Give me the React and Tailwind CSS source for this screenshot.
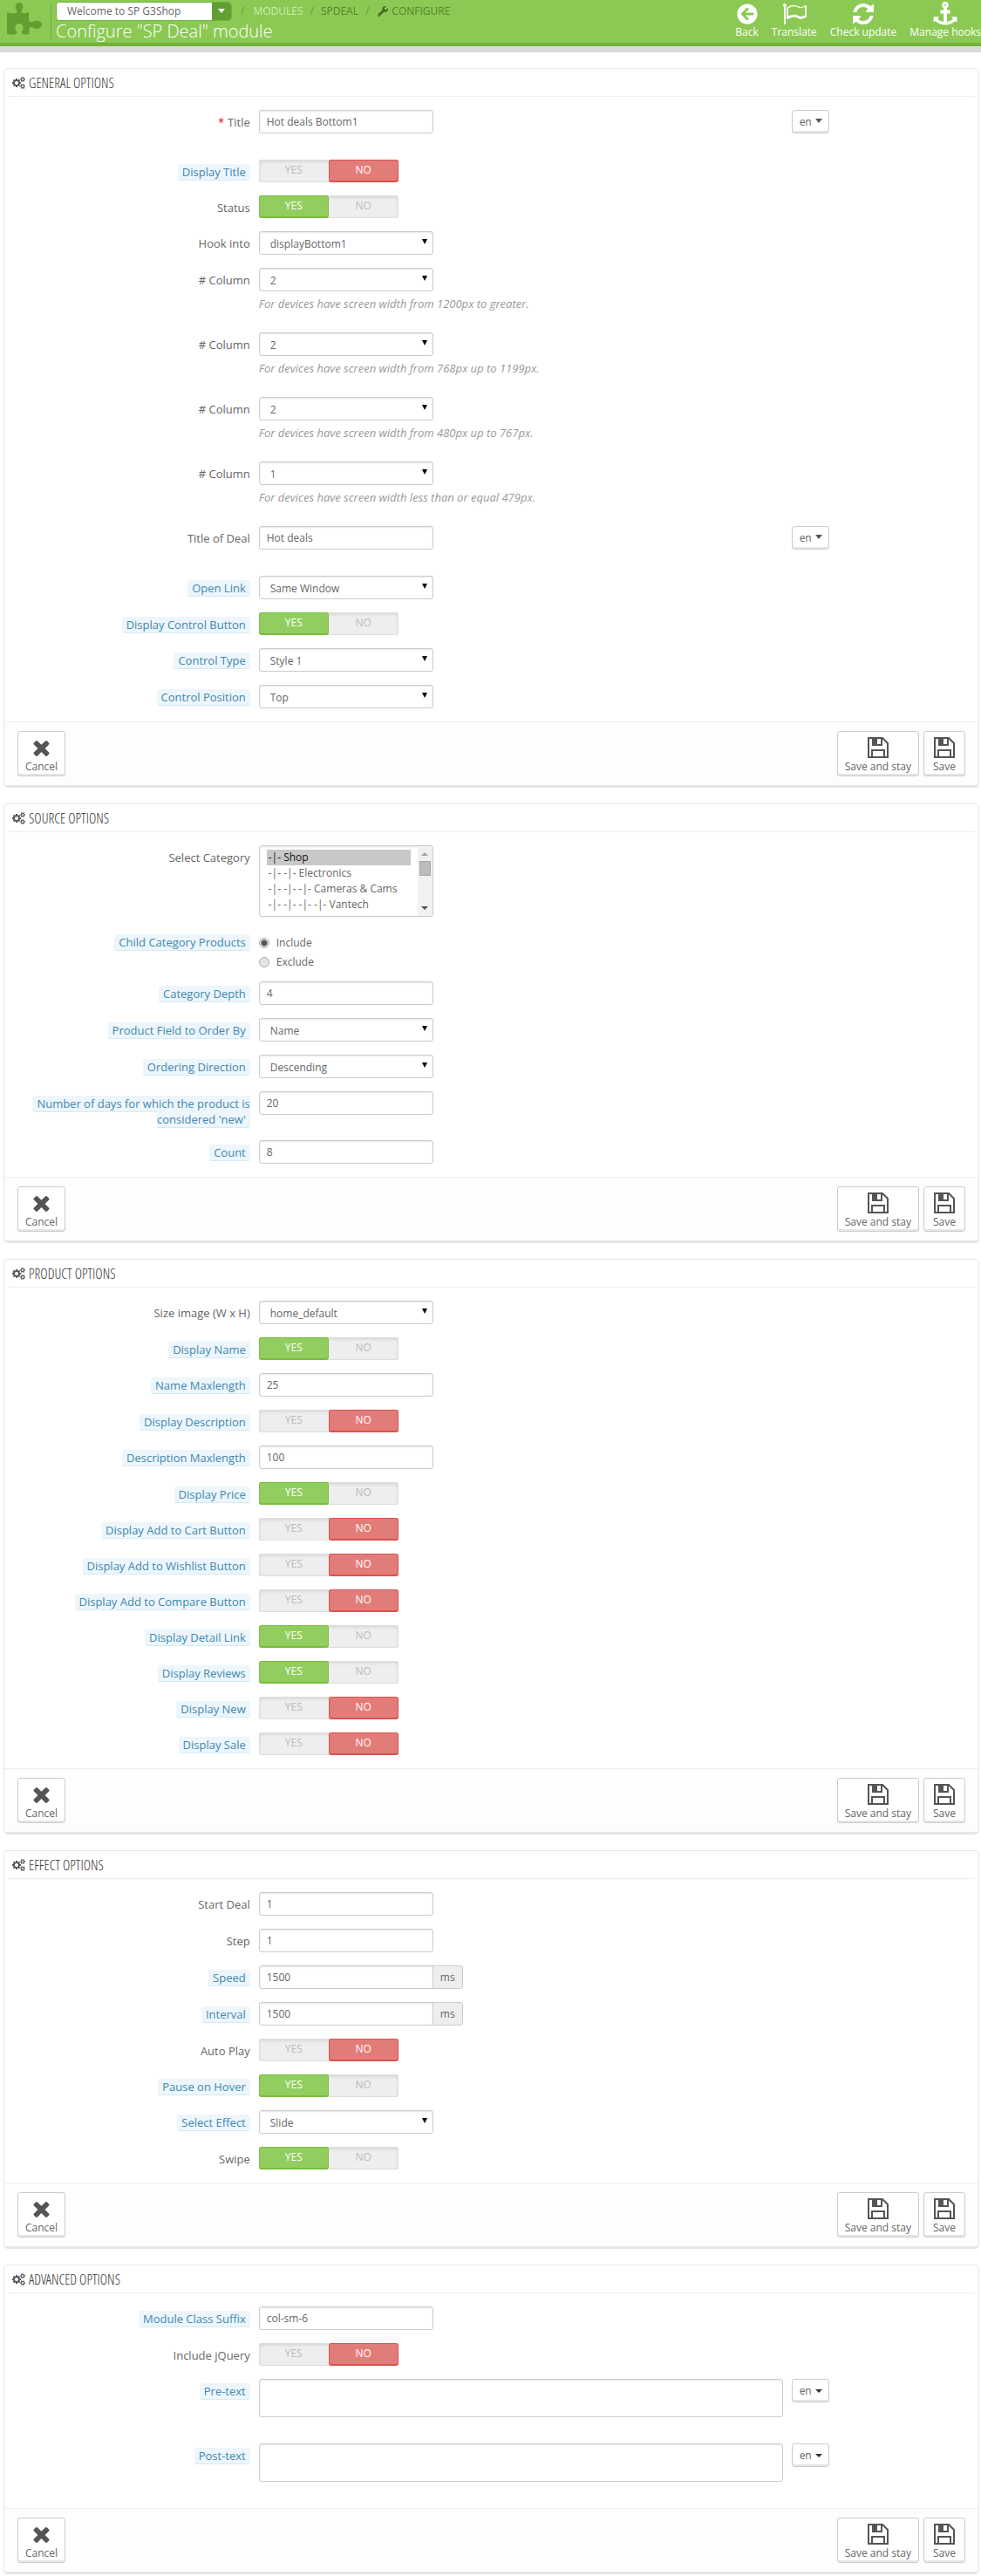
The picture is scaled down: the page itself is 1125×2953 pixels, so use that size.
import { useId, useState } from "react";
import { FaArrowCircleLeft, FaWrench } from "react-icons/fa";

const PANELS = [
  {
    title: "General options",
    fields: [
      { type: "text", label: "Title", value: "Hot deals Bottom1", required: true, lang: true },
      { type: "switch", label: "Display Title", hint: true, on: false },
      { type: "switch", label: "Status", on: true },
      { type: "select", label: "Hook into", value: "displayBottom1" },
      { type: "select", label: "# Column", value: "2", help: "For devices have screen width from 1200px to greater." },
      { type: "select", label: "# Column", value: "2", help: "For devices have screen width from 768px up to 1199px." },
      { type: "select", label: "# Column", value: "2", help: "For devices have screen width from 480px up to 767px." },
      { type: "select", label: "# Column", value: "1", help: "For devices have screen width less than or equal 479px." },
      { type: "text", label: "Title of Deal", value: "Hot deals", lang: true },
      { type: "select", label: "Open Link", hint: true, value: "Same Window" },
      { type: "switch", label: "Display Control Button", hint: true, on: true },
      { type: "select", label: "Control Type", hint: true, value: "Style 1" },
      { type: "select", label: "Control Position", hint: true, value: "Top" },
    ],
  },
  {
    title: "Source options",
    fields: [
      {
        type: "listbox",
        label: "Select Category",
        options: ["-|- Shop", "-|- -|- Electronics", "-|- -|- -|- Cameras & Cams", "-|- -|- -|- -|- Vantech"],
      },
      { type: "radios", label: "Child Category Products", hint: true, options: ["Include", "Exclude"] },
      { type: "text", label: "Category Depth", hint: true, value: "4" },
      { type: "select", label: "Product Field to Order By", hint: true, value: "Name" },
      { type: "select", label: "Ordering Direction", hint: true, value: "Descending" },
      { type: "text", label: "Number of days for which the product is considered 'new'", hint: true, value: "20" },
      { type: "text", label: "Count", hint: true, value: "8" },
    ],
  },
  {
    title: "Product options",
    fields: [
      { type: "select", label: "Size image (W x H)", value: "home_default" },
      { type: "switch", label: "Display Name", hint: true, on: true },
      { type: "text", label: "Name Maxlength", hint: true, value: "25" },
      { type: "switch", label: "Display Description", hint: true, on: false },
      { type: "text", label: "Description Maxlength", hint: true, value: "100" },
      { type: "switch", label: "Display Price", hint: true, on: true },
      { type: "switch", label: "Display Add to Cart Button", hint: true, on: false },
      { type: "switch", label: "Display Add to Wishlist Button", hint: true, on: false },
      { type: "switch", label: "Display Add to Compare Button", hint: true, on: false },
      { type: "switch", label: "Display Detail Link", hint: true, on: true },
      { type: "switch", label: "Display Reviews", hint: true, on: true },
      { type: "switch", label: "Display New", hint: true, on: false },
      { type: "switch", label: "Display Sale", hint: true, on: false },
    ],
  },
  {
    title: "Effect options",
    fields: [
      { type: "text", label: "Start Deal", value: "1" },
      { type: "text", label: "Step", value: "1" },
      { type: "text", label: "Speed", hint: true, value: "1500", suffix: "ms" },
      { type: "text", label: "Interval", hint: true, value: "1500", suffix: "ms" },
      { type: "switch", label: "Auto Play", on: false },
      { type: "switch", label: "Pause on Hover", hint: true, on: true },
      { type: "select", label: "Select Effect", hint: true, value: "Slide" },
      { type: "switch", label: "Swipe", on: true },
    ],
  },
  {
    title: "Advanced options",
    fields: [
      { type: "text", label: "Module Class Suffix", hint: true, value: "col-sm-6" },
      { type: "switch", label: "Include jQuery", on: false },
      { type: "textarea", label: "Pre-text", hint: true, lang: true },
      { type: "textarea", label: "Post-text", hint: true, lang: true },
    ],
  },
];

export default function App() {
  return (
    <div className="min-h-screen overflow-x-hidden bg-white pb-0.5 font-['Open_Sans',sans-serif] text-xs text-[#666]">
      <PageHeader />
      <main className="mt-[18px] ml-1 mr-0.5 flex flex-col gap-[18px]">
        {PANELS.map((panel) => (
          <Panel key={panel.title} {...panel} />
        ))}
      </main>
    </div>
  );
}

function PageHeader() {
  return (
    <header className="border-b-[7px] border-[#d9d9d9]">
      <div className="flex h-[53px] justify-between border-b-4 border-[#72b239] bg-[#8bc954]">
        <div className="flex">
          <div className="flex w-[58px] pt-[3px] pl-2 text-[#619f32]">
            <PuzzleIcon />
          </div>
          <div className="my-1 border-l border-[#6fae3c]" />
          <div className="ml-[5px] pt-0.5">
            <nav className="flex h-[22px] items-center whitespace-nowrap">
              <button
                type="button"
                className="mr-2.5 flex h-[22px] w-[202px] overflow-hidden rounded-sm border border-[#72b239] bg-white text-left leading-5"
              >
                <span className="flex-1 pl-3">Welcome to SP G3Shop</span>
                <span className="flex w-[22px] justify-center bg-[#619f32] pt-[7px] text-white">
                  <Triangle className="h-[5px] w-2" />
                </span>
              </button>
              <span className="text-[#659a3b]">/</span>
              <a href="#modules" className="ml-2.5 text-[#cdecae]">MODULES</a>
              <span className="ml-2 text-[#659a3b]">/</span>
              <a href="#spdeal" className="ml-2 text-[#56852f]">SPDEAL</a>
              <span className="ml-2 text-[#659a3b]">/</span>
              <a href="#configure" className="ml-2.5 flex items-center gap-1 text-[#56852f]">
                <FaWrench className="h-3 w-3 text-[#446b25]" />
                CONFIGURE
              </a>
            </nav>
            <h1 className="text-xl leading-6 font-light text-white">Configure "SP Deal" module</h1>
          </div>
        </div>
        <div className="flex gap-[15px] pt-1 text-white">
          <ToolbarLink label="Back" icon={<FaArrowCircleLeft className="h-6 w-6" />} />
          <ToolbarLink label="Translate" icon={<FlagIcon />} />
          <ToolbarLink label="Check update" icon={<RefreshIcon />} />
          <ToolbarLink label="Manage hooks" icon={<AnchorIcon />} />
        </div>
      </div>
    </header>
  );
}

function ToolbarLink({ label, icon }) {
  return (
    <a href="#action" className="flex flex-col items-center whitespace-nowrap leading-[18px]">
      <span className="flex h-6 items-center">{icon}</span>
      {label}
    </a>
  );
}

function Panel({ title, fields }) {
  return (
    <section className="rounded-[5px] border border-b-[3px] border-[#e6e6e6] bg-white">
      <h2 className="mx-1 mb-[15px] flex h-8 items-center gap-1 border-b border-[#eee] pl-[5px] font-['Open_Sans_Condensed_Light','Open_Sans_Condensed',sans-serif] text-base text-[#333] uppercase">
        <CogsIcon />
        {title}
      </h2>
      <form onSubmit={(e) => e.preventDefault()}>
        <div className="flex flex-col gap-[15px] px-[15px] pb-[15px]">
          {fields.map((field, i) => (
            <Field key={i} {...field} />
          ))}
        </div>
        <div className="flex justify-between rounded-b-[5px] border-t border-[#eee] bg-[#fcfdfe] px-[15px] py-2.5">
          <FooterButton label="Cancel" icon={<TimesIcon />} />
          <div className="flex gap-[5px]">
            <FooterButton label="Save and stay" icon={<SaveIcon />} />
            <FooterButton label="Save" icon={<SaveIcon />} />
          </div>
        </div>
      </form>
    </section>
  );
}

function FooterButton({ label, icon }) {
  return (
    <button
      type="button"
      className="flex h-[52px] flex-col items-center rounded-[3px] border border-[#ccc] bg-white px-2 pt-[5px] leading-[18px] shadow-[inset_0_-2px_0_#e6e6e6]"
    >
      <span className="flex h-[26px] w-[30px] items-center justify-center text-[#555]">{icon}</span>
      {label}
    </button>
  );
}

function Field({ label, hint, required, help, lang, type, ...rest }) {
  const id = useId();
  const grouped = type === "switch" || type === "radios";
  const LabelTag = grouped ? "div" : "label";

  return (
    <div className="flex" role={grouped ? "group" : undefined} aria-labelledby={grouped ? id + "-label" : undefined}>
      <LabelTag
        id={id + "-label"}
        htmlFor={grouped ? undefined : id}
        className="w-1/4 px-[5px] pt-[5px] text-right text-[13px] leading-[18px]"
      >
        {required && <span className="mr-1 text-red-600">*</span>}
        {hint ? (
          <span className="rounded-[3px] border-b border-[#d3ebf7] bg-[#edf6fb] px-[5px] text-[#3f87b0]">{label}</span>
        ) : (
          label
        )}
      </LabelTag>
      <div className="flex w-3/4">
        <div className={lang ? "w-3/4 px-[5px] pb-[15px]" : "px-[5px]"}>
          <Control id={id} type={type} {...rest} />
          {help && <p className="mt-[5px] mb-[9px] text-[13px] leading-[18px] text-[#999] italic">{help}</p>}
        </div>
        {lang && (
          <div className="px-[5px]">
            <button
              type="button"
              className="flex h-[27px] w-[43px] items-center justify-center gap-1 rounded-[3px] border border-[#ccc] bg-white shadow-[inset_0_-2px_0_#e6e6e6]"
            >
              en
              <Triangle className={type === "textarea" ? "h-1 w-2 text-[#333]" : "mb-[3px] h-[5px] w-2 text-[#555]"} />
            </button>
          </div>
        )}
      </div>
    </div>
  );
}

const boxClass = "border border-[#ccc] bg-white shadow-[inset_0_1px_2px_rgba(0,0,0,0.1)] outline-none";

function Control({ id, type, value, suffix, on, options }) {
  if (type === "switch") return <Switch name={id} on={on} />;
  if (type === "radios") return <Radios name={id} options={options} />;
  if (type === "listbox") return <Listbox id={id} options={options} />;

  if (type === "textarea") {
    return <textarea id={id} className={`block h-11 w-full resize-none rounded-[3px] px-2 py-1 ${boxClass}`} />;
  }

  if (type === "select") {
    return (
      <div className="relative w-[200px]">
        <select id={id} className={`block h-[27px] w-full appearance-none rounded-[3px] pt-0.5 pl-3 leading-[23px] ${boxClass}`}>
          <option>{value}</option>
        </select>
        <Triangle className="pointer-events-none absolute top-[9px] right-[7px] h-1.5 w-1.5 text-black" />
      </div>
    );
  }

  return (
    <div className="flex">
      <input
        id={id}
        type="text"
        defaultValue={value}
        className={`h-[27px] w-[200px] px-2 ${suffix ? "rounded-l-[3px]" : "rounded-[3px]"} ${boxClass}`}
      />
      {suffix && (
        <span className="-ml-px flex h-[27px] w-[35px] items-center justify-center rounded-r-[3px] border border-[#ccc] bg-[#eee]">
          {suffix}
        </span>
      )}
    </div>
  );
}

function Switch({ name, on }) {
  const [value, setValue] = useState(on);
  const half =
    "flex w-20 cursor-pointer items-center justify-center rounded-[3px] border border-transparent pb-0.5 text-[#bbb]";

  return (
    <div className="flex h-[26px] w-40 rounded-[3px] bg-[#eee] shadow-[inset_0_0_0_1px_#ddd,inset_0_2px_4px_rgba(0,0,0,0.12)]">
      <label className={`${half} has-checked:border-b-2 has-checked:border-[#79bd3c] has-checked:bg-[#92ce5f] has-checked:pb-px has-checked:text-white`}>
        <input type="radio" name={name} className="sr-only" checked={value} onChange={() => setValue(true)} />
        YES
      </label>
      <label className={`${half} has-checked:border-b-2 has-checked:border-[#d9534f] has-checked:bg-[#e27c79] has-checked:pb-px has-checked:text-white`}>
        <input type="radio" name={name} className="sr-only" checked={!value} onChange={() => setValue(false)} />
        NO
      </label>
    </div>
  );
}

function Radios({ name, options }) {
  return (
    <div>
      {options.map((option, i) => (
        <label key={option} className="flex h-[22px] items-center gap-2 pt-2">
          <input
            type="radio"
            name={name}
            defaultChecked={i === 0}
            className="h-3 w-3 appearance-none rounded-full border border-[#aaa] bg-[#e4e4e4] checked:bg-[radial-gradient(circle,#555_3px,#e4e4e4_4px)]"
          />
          {option}
        </label>
      ))}
    </div>
  );
}

function Listbox({ id, options }) {
  return (
    <div className={`flex h-[82px] w-[200px] overflow-hidden rounded-[3px] ${boxClass}`}>
      <select
        id={id}
        multiple
        size={4}
        defaultValue={[options[0]]}
        className="h-20 min-w-0 flex-1 overflow-hidden bg-transparent py-1 pr-2 pl-2 outline-none"
      >
        {options.map((option) => (
          <option
            key={option}
            className="h-[18px] px-0.5 py-0 leading-[18px] checked:bg-[#c8c8c8] checked:bg-[linear-gradient(#c8c8c8,#c8c8c8)]"
          >
            {option}
          </option>
        ))}
      </select>
      <div className="flex w-[17px] flex-col items-center bg-[#f1f1f1] pt-[7px] pb-[7px]" aria-hidden="true">
        <Triangle className="h-1 w-2 rotate-180 text-[#a3a3a3]" />
        <span className="mt-1.5 h-[17px] w-[13px] border border-[#a8a8a8] bg-[#bcbcbc]" />
        <Triangle className="mt-auto h-1 w-2 text-[#505050]" />
      </div>
    </div>
  );
}

function Triangle({ className }) {
  return (
    <svg viewBox="0 0 10 6" preserveAspectRatio="none" fill="currentColor" className={className} aria-hidden="true">
      <path d="M0 0h10L5 6z" />
    </svg>
  );
}

function PuzzleIcon() {
  return (
    <svg viewBox="0 0 120 111" fill="currentColor" className="h-[37px] w-10" aria-hidden="true">
      <path d="M0 34C10 36 24 38 30 36C36 34 36 30 33 25C27 17 28 0 42 0C56 0 57 17 52 24C48 30 49 35 55 36C62 37 70 34 76 32C75 42 74 52 76 60C78 68 82 69 88 66C96 60 120 60 120 76C120 92 98 92 90 86C84 82 78 84 77 90C76 96 76 102 77 108C70 110 60 110 54 108C50 106 50 102 52 98C60 88 56 72 42 72C28 72 25 88 33 98C36 103 35 107 30 109C20 111 8 110 0 108Z" />
    </svg>
  );
}

function SaveIcon() {
  return (
    <svg viewBox="0 0 24 24" className="h-6 w-6" aria-hidden="true">
      <path d="M1 1h16l6 6v16H1z" fill="none" stroke="currentColor" strokeWidth="2" />
      <path d="M5 1h12v9H5zM11 2v6h4V2z" fill="currentColor" fillRule="evenodd" />
      <path d="M5 23v-8h14v8" fill="none" stroke="currentColor" strokeWidth="2" />
    </svg>
  );
}

function TimesIcon() {
  return (
    <svg viewBox="302 302 1188 1252" fill="currentColor" className="h-[19px] w-[19px]" aria-hidden="true">
      <path d="M1490 1322q0 40-28 68l-136 136q-28 28-68 28t-68-28l-294-294-294 294q-28 28-68 28t-68-28l-136-136q-28-28-28-68t28-68l294-294-294-294q-28-28-28-68t28-68l136-136q28-28 68-28t68 28l294 294 294-294q28-28 68-28t68 28l136 136q28 28 28 68t-28 68l-294 294 294 294q28 28 28 68z" />
    </svg>
  );
}

function RefreshIcon() {
  return (
    <svg viewBox="128 128 1536 1536" fill="currentColor" className="h-6 w-6" aria-hidden="true">
      <path d="M1639 1056q0 5-1 7-64 268-268 434.5t-478 166.5q-146 0-282.5-55t-243.5-157l-129 129q-19 19-45 19t-45-19-19-45v-448q0-26 19-45t45-19h448q26 0 45 19t19 45-19 45l-137 137q71 66 161 102t187 36q134 0 250-65t186-179q11-17 53-117 8-23 30-23h192q13 0 22.5 9.5t9.5 22.5zm25-800v448q0 26-19 45t-45 19h-448q-26 0-45-19t-19-45 19-45l138-138q-148-137-349-137-134 0-250 65t-186 179q-11 17-53 117-8 23-30 23h-199q-13 0-22.5-9.5t-9.5-22.5v-7q65-268 270-434.5t480-166.5q146 0 284 55.5t245 156.5l130-129q19-19 45-19t45 19 19 45z" />
    </svg>
  );
}

function AnchorIcon() {
  return (
    <svg viewBox="0 0 1792 1870" fill="currentColor" className="h-7 w-7" aria-hidden="true">
      <path d="M960 256q0-26-19-45t-45-19-45 19-19 45 19 45 45 19 45-19 19-45zm832 928v352q0 22-20 30-8 2-12 2-12 0-23-9l-93-93q-119 143-318.5 226.5t-429.5 83.5-429.5-83.5-318.5-226.5l-93 93q-9 9-23 9-4 0-12-2-20-8-20-30v-352q0-14 9-23t23-9h352q22 0 30 20 8 19-7 35l-100 100q67 91 189.5 153.5t271.5 82.5v-647h-192q-26 0-45-19t-19-45v-128q0-26 19-45t45-19h192v-163q-58-34-93-92.5t-35-128.5q0-106 75-181t181-75 181 75 75 181q0 70-35 128.5t-93 92.5v163h192q26 0 45 19t19 45v128q0 26-19 45t-45 19h-192v647q149-20 271.5-82.5t189.5-153.5l-100-100q-15-16-7-35 8-20 30-20h352q14 0 23 9t9 23z" />
    </svg>
  );
}

function FlagIcon() {
  return (
    <svg viewBox="0 0 1792 1792" fill="currentColor" className="h-7 w-7" aria-hidden="true">
      <path d="M1664 991v-616q-169 91-306 91-82 0-145-32-100-49-184-76.5t-178-27.5q-173 0-403 127v599q245-113 433-113 55 0 103.5 7.5t98 26 77 31 82.5 39.5l28 14q44 22 101 22 120 0 293-92zm-1344-735q0 35-17.5 64t-46.5 46v1266q0 14-9 23t-23 9h-64q-14 0-23-9t-9-23v-1266q-29-17-46.5-46t-17.5-64q0-53 37.5-90.5t90.5-37.5 90.5 37.5 37.5 90.5zm1472 64v763q0 39-35 57-10 5-17 9-218 116-369 116-88 0-158-35l-28-14q-64-33-99-48t-91-29-114-14q-102 0-235.5 44t-228.5 102q-15 9-33 9-16 0-32-8-32-19-32-56v-742q0-35 31-55 35-21 78.5-42.5t114-52 152.5-49.5 155-19q112 0 209 31t209 86q38 19 89 19 122 0 310-112 22-12 31-17 31-16 62 2 31 20 31 55z" />
    </svg>
  );
}

function CogsIcon() {
  return (
    <svg viewBox="0 0 1920 1792" fill="currentColor" className="h-[14px] w-[15px] text-[#555]" aria-hidden="true">
      <path d="M896 896q0-106-75-181t-181-75-181 75-75 181 75 181 181 75 181-75 75-181zm768 512q0-52-38-90t-90-38-90 38-38 90q0 53 37.5 90.5t90.5 37.5 90.5-37.5 37.5-90.5zm0-1024q0-52-38-90t-90-38-90 38-38 90q0 53 37.5 90.5t90.5 37.5 90.5-37.5 37.5-90.5zm-384 421v185q0 10-7 19.5t-16 10.5l-155 24q-11 35-32 76 34 48 90 115 7 11 7 20 0 12-7 19-23 30-82.5 89.5t-78.5 59.5q-11 0-21-7l-115-90q-37 19-77 31-11 108-23 155-7 24-30 24h-186q-11 0-20-7.5t-10-17.5l-23-153q-34-10-75-31l-118 89q-7 7-20 7-11 0-21-8-144-133-144-160 0-9 7-19 10-14 41-53t47-61q-23-44-35-82l-152-24q-10-1-17-9.5t-7-19.5v-185q0-10 7-19.5t16-10.5l155-24q11-35 32-76-34-48-90-115-7-11-7-20 0-12 7-20 22-30 82-89t79-59q11 0 21 7l115 90q34-18 77-32 11-108 23-154 7-24 30-24h186q11 0 20 7.5t10 17.5l23 153q34 10 75 31l118-89q8-7 20-7 11 0 21 8 144 133 144 160 0 8-7 19-12 16-42 54t-45 60q23 48 34 82l152 23q10 2 17 10.5t7 19.5zm640 533v140q0 16-149 31-12 27-30 52 51 113 51 138 0 4-4 7-122 71-124 71-8 0-46-47t-52-68q-20 2-30 2t-30-2q-14 21-52 68t-46 47q-2 0-124-71-4-3-4-7 0-25 51-138-18-25-30-52-149-15-149-31v-140q0-16 149-31 13-29 30-52-51-113-51-138 0-4 4-7 4-2 35-20t59-34 30-16q8 0 46 46.5t52 67.5q20-2 30-2t30 2q51-71 92-112l6-2q4 0 124 70 4 3 4 7 0 25-51 138 17 23 30 52 149 15 149 31zm0-1024v140q0 16-149 31-12 27-30 52 51 113 51 138 0 4-4 7-122 71-124 71-8 0-46-47t-52-68q-20 2-30 2t-30-2q-14 21-52 68t-46 47q-2 0-124-71-4-3-4-7 0-25 51-138-18-25-30-52-149-15-149-31v-140q0-16 149-31 13-29 30-52-51-113-51-138 0-4 4-7 4-2 35-20t59-34 30-16q8 0 46 46.5t52 67.5q20-2 30-2t30 2q51-71 92-112l6-2q4 0 124 70 4 3 4 7 0 25-51 138 17 23 30 52 149 15 149 31z" />
    </svg>
  );
}
